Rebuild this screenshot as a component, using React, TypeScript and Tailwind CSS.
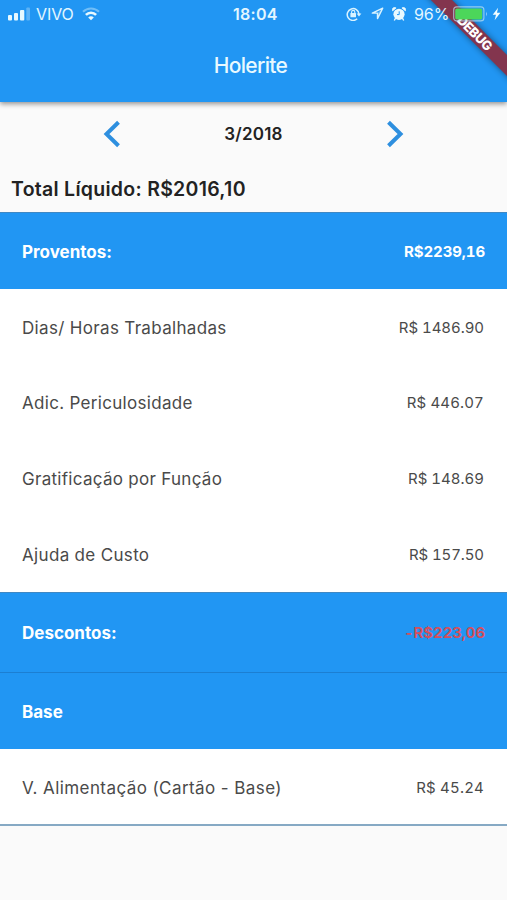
import React from "react";

type Item = { label: string; value: string; labelClass: string; valueClass: string };

const earnings: Item[] = [
  { label: "Dias/ Horas Trabalhadas", value: "R$ 1486.90", labelClass: "tracking-[0.33px]", valueClass: "tracking-[-0.05px]" },
  { label: "Adic. Periculosidade", value: "R$ 446.07", labelClass: "tracking-[0.31px]", valueClass: "tracking-[0.15px]" },
  { label: "Gratificação por Função", value: "R$ 148.69", labelClass: "tracking-[0.29px]", valueClass: "tracking-[0px]" },
  { label: "Ajuda de Custo", value: "R$ 157.50", labelClass: "tracking-[0.33px]", valueClass: "tracking-[-0.1px]" },
];

function Row({ item, className }: { item: Item; className: string }) {
  return (
    <div className={`flex items-center justify-between bg-white pl-[22px] pr-[23px] pt-[2px] text-[#4a4a4a] ${className}`}>
      <span className={`pt-px text-[17px] ${item.labelClass}`}>{item.label}</span>
      <span className={`text-[15px] tabular-nums ${item.valueClass}`}>{item.value}</span>
    </div>
  );
}

function SectionHeader({ title, value, valueClass, className }: { title: string; value?: string; valueClass?: string; className: string }) {
  return (
    <div className={`flex items-center justify-between bg-[#2196f3] pl-[22px] pr-[22px] pt-[2px] font-bold text-white ${className}`}>
      <span className="pt-px text-[17px]">{title}</span>
      {value && <span className={`text-[15px] tabular-nums tracking-[-0.1px] ${valueClass ?? ""}`}>{value}</span>}
    </div>
  );
}

function Signal() {
  return (
    <svg width="22" height="14" viewBox="0 0 22 14" fill="#e8f9ff">
      <rect x="0" y="8" width="4" height="5.5" rx="1" />
      <rect x="6" y="6" width="4" height="7.5" rx="1" />
      <rect x="12" y="3" width="4.3" height="10.5" rx="1" />
      <rect x="18.3" y="0.5" width="3.7" height="13" rx="1" opacity="0.3" />
    </svg>
  );
}

function Wifi() {
  return (
    <svg width="18" height="14" viewBox="0 0 18 14" fill="none" stroke="#e8f9ff">
      <path d="M1 4.8C5.5 .4 12.5 .4 17 4.8" strokeWidth="2.1" opacity="0.4" />
      <path d="M3.9 7.9C6.8 5 11.2 5 14.1 7.9" strokeWidth="2.6" />
      <path d="M6.2 10.4C7.8 8.9 10.2 8.9 11.8 10.4L9 13.2Z" fill="#e8f9ff" stroke="none" />
    </svg>
  );
}

function RotationLock() {
  return (
    <svg width="16" height="14" viewBox="0 0 16 14" fill="none" stroke="#d9f3ff">
      <path d="M11.2 11.8A5.9 5.9 0 1 1 13 7" strokeWidth="1.5" />
      <path d="M10.6 6.4H15.4L13 9.5Z" fill="#d9f3ff" stroke="none" />
      <path d="M5.6 6.4V5a1.6 1.6 0 0 1 3.2 0V6.4" strokeWidth="1.1" />
      <rect x="4.4" y="6.1" width="5.6" height="4.1" rx=".5" fill="#d9f3ff" stroke="none" />
    </svg>
  );
}

function LocationArrow() {
  return (
    <svg width="13" height="13" viewBox="0 0 13 13" fill="none" stroke="#d9f3ff" strokeWidth="1.4" strokeLinejoin="round">
      <path d="M11.7 1.2L1.3 6.1H6.5V11.6Z" />
      <path d="M11.7 1.2L6.5 6.1V11.6Z" fill="#d9f3ff" stroke="none" opacity=".35" />
    </svg>
  );
}

function Alarm() {
  return (
    <svg width="14" height="14" viewBox="0 0 14 14" fill="#e8f9ff">
      <circle cx="7" cy="7.3" r="5.6" />
      <path d="M.6 3.9A2.3 2.3 0 0 1 4.1 1ZM13.4 3.9A2.3 2.3 0 0 0 9.9 1Z" stroke="#e8f9ff" strokeWidth=".7" />
      <path d="M2.3 13.5L3.6 11.2M11.7 13.5L10.4 11.2" stroke="#e8f9ff" strokeWidth="1.4" />
      <path d="M7.2 4.3V7.6H5" fill="none" stroke="#2196f3" strokeWidth="1" />
    </svg>
  );
}

function Battery() {
  return (
    <svg width="36" height="16" viewBox="0 0 36 16">
      <rect x=".7" y=".9" width="30.2" height="14" rx="3" fill="none" stroke="#b9dfee" strokeWidth="1.1" opacity=".75" />
      <rect x="2.2" y="2.4" width="27" height="11" rx="1.6" fill="#4cd65a" />
      <path d="M33 5.5Q34.8 8 33 10.5Z" fill="#c5e6fa" opacity=".8" />
    </svg>
  );
}

function Bolt() {
  return (
    <svg width="9" height="14" viewBox="0 0 9 14" fill="#f2fcff">
      <path d="M6.1.8L.7 7.8H4L2.6 13.2L8.4 5.8H5Z" />
    </svg>
  );
}

function StatusBar() {
  return (
    <div className="relative z-20 flex h-[27px] items-center pl-2 text-[#e3f6ff]">
      <div className="flex w-[225px] items-center">
        <Signal />
        <span className="ml-[6px] w-[46px] text-[16px] leading-none tracking-[-0.1px]">VIVO</span>
        <Wifi />
      </div>
      <span className="w-[113px] text-[16px] font-semibold leading-none tracking-[0.3px]">18:04</span>
      <RotationLock />
      <span className="ml-[9px] flex"><LocationArrow /></span>
      <span className="ml-[8px] flex"><Alarm /></span>
      <span className="ml-[8px] w-[39px] text-[16px] leading-none tracking-[-0.1px]">96%</span>
      <Battery />
      <span className="ml-[3px] flex"><Bolt /></span>
    </div>
  );
}

export default function App() {
  return (
    <div className="relative flex h-[900px] w-[507px] flex-col overflow-hidden bg-[#fafafa] font-['Inter','Liberation_Sans',sans-serif]">
      <header className="relative h-[102px] shrink-0 bg-[#2196f3] shadow-[0_2px_5px_rgba(0,0,0,0.42)]">
        <StatusBar />
        <h1 className="mt-[24px] pr-[6px] text-center text-[21px] font-medium leading-[30px] tracking-[-0.7px] text-[#e8f9ff]">Holerite</h1>
        <div className="absolute right-0 top-0 h-[102px] w-[102px] overflow-hidden">
          <div className="absolute left-[-4px] top-[26px] flex h-[15px] w-[148px] rotate-45 items-center justify-center bg-[#83354e] pr-[1px] text-[13px] font-extrabold leading-none tracking-[-0.4px] text-white shadow-[0_0_6px_rgba(0,0,0,0.45)]">
            DEBUG
          </div>
        </div>
      </header>

      <nav className="flex h-[63px] shrink-0 items-center justify-between pl-[103px] pr-[103px]">
        <svg width="18" height="28" viewBox="0 0 18 28" fill="none" stroke="#2e8fdf" strokeWidth="4">
          <path d="M15.5 2.3L3.5 14L15.5 25.7" />
        </svg>
        <span className="pt-[2px] text-[17px] font-semibold tracking-[0.2px] text-[#222]">3/2018</span>
        <svg width="18" height="28" viewBox="0 0 18 28" fill="none" stroke="#2e8fdf" strokeWidth="4">
          <path d="M2.5 2.3L14.5 14L2.5 25.7" />
        </svg>
      </nav>

      <div className="flex h-[47px] shrink-0 items-center pl-[11px] pt-[2px] text-[19.5px] font-semibold tracking-[0.28px] text-[#222]">Total Líquido: R$2016,10</div>

      <SectionHeader title="Proventos:" value="R$2239,16" className="h-[77px] shrink-0 border-t border-[#3f88c4]" />
      {earnings.map((item) => (
        <Row key={item.label} item={item} className="h-[75.7px] shrink-0" />
      ))}
      <SectionHeader title="Descontos:" value="-R$223,06" valueClass="text-[#d2505f]" className="h-[80.5px] shrink-0 border-t border-[#3f88c4]" />
      <SectionHeader title="Base" className="h-[77px] shrink-0 border-t border-[#1c7fd2]" />
      <Row
        item={{ label: "V. Alimentação (Cartão - Base)", value: "R$ 45.24", labelClass: "tracking-[0.42px]", valueClass: "tracking-[0.2px]" }}
        className="h-[77px] shrink-0 border-b-2 border-[#86a9c4]"
      />
    </div>
  );
}
